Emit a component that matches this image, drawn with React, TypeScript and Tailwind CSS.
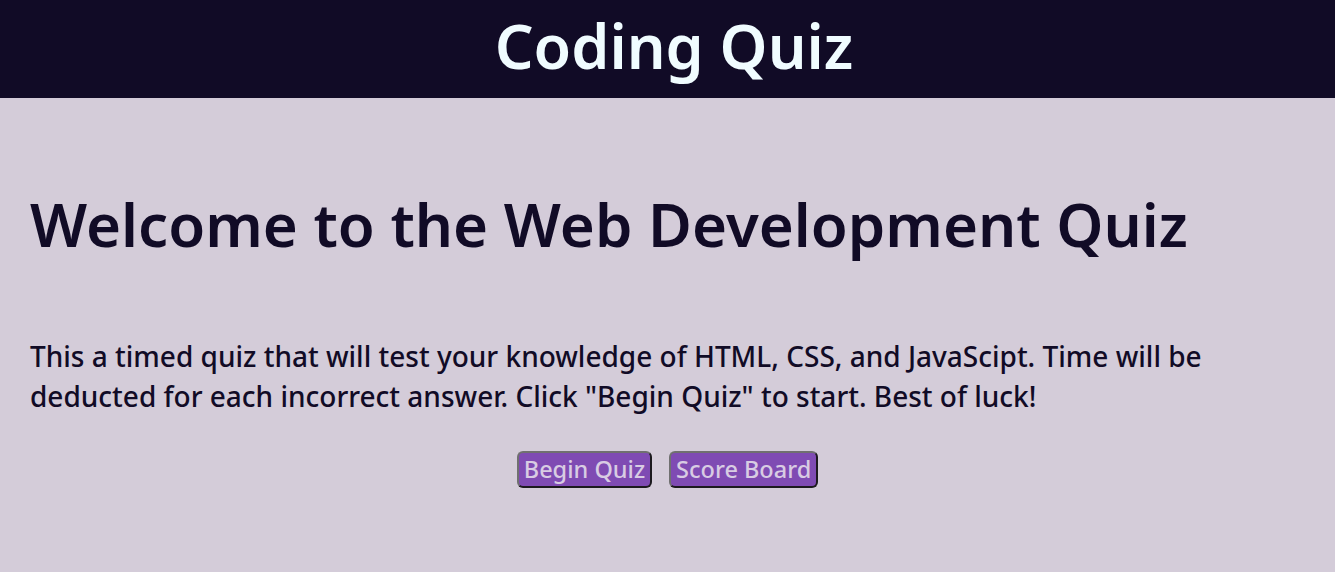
export default function App() {
  return (
    <div className="min-h-[572px] bg-[#d4ccd9] font-['Noto_Sans',sans-serif]">
      <header className="flex h-[98px] items-center justify-center bg-[#110b26] pl-[13px]">
        <h1 className="-mt-[7px] text-[61px] leading-none font-semibold text-[#f0fcff]">Coding Quiz</h1>
      </header>

      <main className="px-[30px]">
        <h2 className="mt-[96px] text-[60px] leading-none font-semibold text-[#110b26]">
          Welcome to the Web Development Quiz
        </h2>
        <p className="mt-[82px] text-[28px] leading-[40px] font-medium text-[#110b26]">
          This a timed quiz that will test your knowledge of HTML, CSS, and JavaScipt. Time will be
          deducted for each incorrect answer. Click "Begin Quiz" to start. Best of luck!
        </p>
        <div className="mt-[35px] flex justify-center gap-[17px]">
          <button className="rounded-[6px] border-2 border-t-[#707070] border-l-[#707070] border-r-[#1c1a1e] border-b-[#1c1a1e] bg-[#7f4bb3] px-[5px] text-[23.5px] leading-[33px] font-medium text-[#d8cce3]">
            Begin Quiz
          </button>
          <button className="rounded-[6px] border-2 border-t-[#707070] border-l-[#707070] border-r-[#1c1a1e] border-b-[#1c1a1e] bg-[#7f4bb3] px-[5px] text-[23.5px] leading-[33px] font-medium text-[#d8cce3]">
            Score Board
          </button>
        </div>
      </main>
    </div>
  )
}
